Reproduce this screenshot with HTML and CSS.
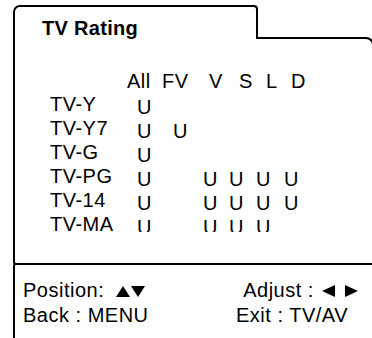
FILE: index.html
```html
<!DOCTYPE html>
<html lang="en">

<head>
  <meta charset="UTF-8" />
  <meta name="viewport" content="width=device-width, initial-scale=1.0" />
  <title>TV Rating</title>
  <link rel="stylesheet" href="styles.css">
</head>

<body>
  <div class="osd">
    <div class="tab">
      <h1>TV Rating</h1>
    </div>

    <div class="panel">
      <div class="ratings">
        <div class="row head">
          <span class="h-all">All</span>
          <span class="h-fv">FV</span>
          <span class="h-v">V</span>
          <span class="h-s">S</span>
          <span class="h-l">L</span>
          <span class="h-d">D</span>
        </div>
        <div class="row">
          <span class="label">TV-Y</span>
          <span class="u c-all">U</span>
        </div>
        <div class="row">
          <span class="label">TV-Y7</span>
          <span class="u c-all">U</span>
          <span class="u c-fv">U</span>
        </div>
        <div class="row">
          <span class="label">TV-G</span>
          <span class="u c-all">U</span>
        </div>
        <div class="row">
          <span class="label">TV-PG</span>
          <span class="u c-all">U</span>
          <span class="u c-v">U</span>
          <span class="u c-s">U</span>
          <span class="u c-l">U</span>
          <span class="u c-d">U</span>
        </div>
        <div class="row">
          <span class="label">TV-14</span>
          <span class="u c-all">U</span>
          <span class="u c-v">U</span>
          <span class="u c-s">U</span>
          <span class="u c-l">U</span>
          <span class="u c-d">U</span>
        </div>
        <div class="row">
          <span class="label">TV-MA</span>
          <span class="u c-all">U</span>
          <span class="u c-v">U</span>
          <span class="u c-s">U</span>
          <span class="u c-l">U</span>
        </div>
      </div>
    </div>

    <div class="footer">
      <div class="hint-row">
        <span>Position:
          <span class="arrows first">
            <svg width="14" height="11" viewBox="0 0 14 11"><polygon points="7,0 14,11 0,11" /></svg>
            <svg width="14" height="11" viewBox="0 0 14 11"><polygon points="0,0 14,0 7,11" /></svg>
          </span>
        </span>
        <span>Adjust :
          <span class="arrows">
            <svg width="13" height="12" viewBox="0 0 13 12"><polygon points="0,6 13,0 13,12" /></svg>
            <svg width="13" height="12" viewBox="0 0 13 12"><polygon points="0,0 13,6 0,12" /></svg>
          </span>
        </span>
      </div>
      <div class="hint-row">
        <span>Back : MENU</span>
        <span class="hint-exit">Exit : TV/AV</span>
      </div>
    </div>
  </div>
</body>

</html>
```

FILE: styles.css
```css
html,
body {
  height: 338px;
  overflow: hidden;
}

body {
  margin: 0;
  background: #fff;
  color: #000;
  font-family: 'Liberation Sans', Arial, sans-serif;
  font-size: 20px;
  letter-spacing: 0.5px;
}

.osd {
  width: 361px;
  margin: 5px 0 0 13px;
}

.tab {
  position: relative;
  box-sizing: border-box;
  width: 245px;
  height: 34px;
  margin-bottom: -2px;
  padding: 10px 0 0 27px;
  background: #fff;
  border: 2px solid #000;
  border-bottom: none;
  border-radius: 7px 4px 0 0;
}

.tab h1 {
  margin: 0;
  font-size: 20px;
  font-weight: bold;
  line-height: 23px;
  letter-spacing: 0.3px;
}

.panel {
  box-sizing: border-box;
  height: 228px;
  padding: 31px 0 0 35px;
  border: 2px solid #000;
  border-radius: 0 8px 0 3px;
}

.ratings {
  height: 162px;
  overflow: hidden;
}

.row {
  display: grid;
  grid-template-columns: 87px 36px 30px 26px 27px 28px auto;
  height: 24px;
  line-height: 24px;
}

.row.head {
  grid-template-columns: 77px 35px 47px 30px 27px 25px auto;
  height: 22px;
  line-height: 22px;
}

.h-all { grid-column: 2; }
.h-fv { grid-column: 3; }
.h-v { grid-column: 4; }
.h-s { grid-column: 5; }
.h-l { grid-column: 6; }
.h-d { grid-column: 7; }

.label { grid-column: 1; }
.c-all { grid-column: 2; }
.c-fv { grid-column: 3; }
.c-v { grid-column: 4; }
.c-s { grid-column: 5; }
.c-l { grid-column: 6; }
.c-d { grid-column: 7; }

.u {
  margin-top: 3px;
  letter-spacing: 0;
}

.footer {
  box-sizing: border-box;
  height: 100px;
  margin-top: -2px;
  padding: 13px 14px 0 8px;
  border: 2px solid #000;
  border-bottom: none;
  border-radius: 3px 0 0 0;
  line-height: 25px;
}

.hint-row {
  display: flex;
  justify-content: space-between;
}

.hint-exit {
  margin-right: 10px;
}

.arrows {
  margin-left: 2px;
}

.arrows.first {
  margin-left: 6px;
}

.arrows svg {
  fill: #000;
  vertical-align: 0;
}

.arrows svg + svg {
  margin-left: 4px;
}

.arrows.first svg + svg {
  margin-left: -5px;
}
```
